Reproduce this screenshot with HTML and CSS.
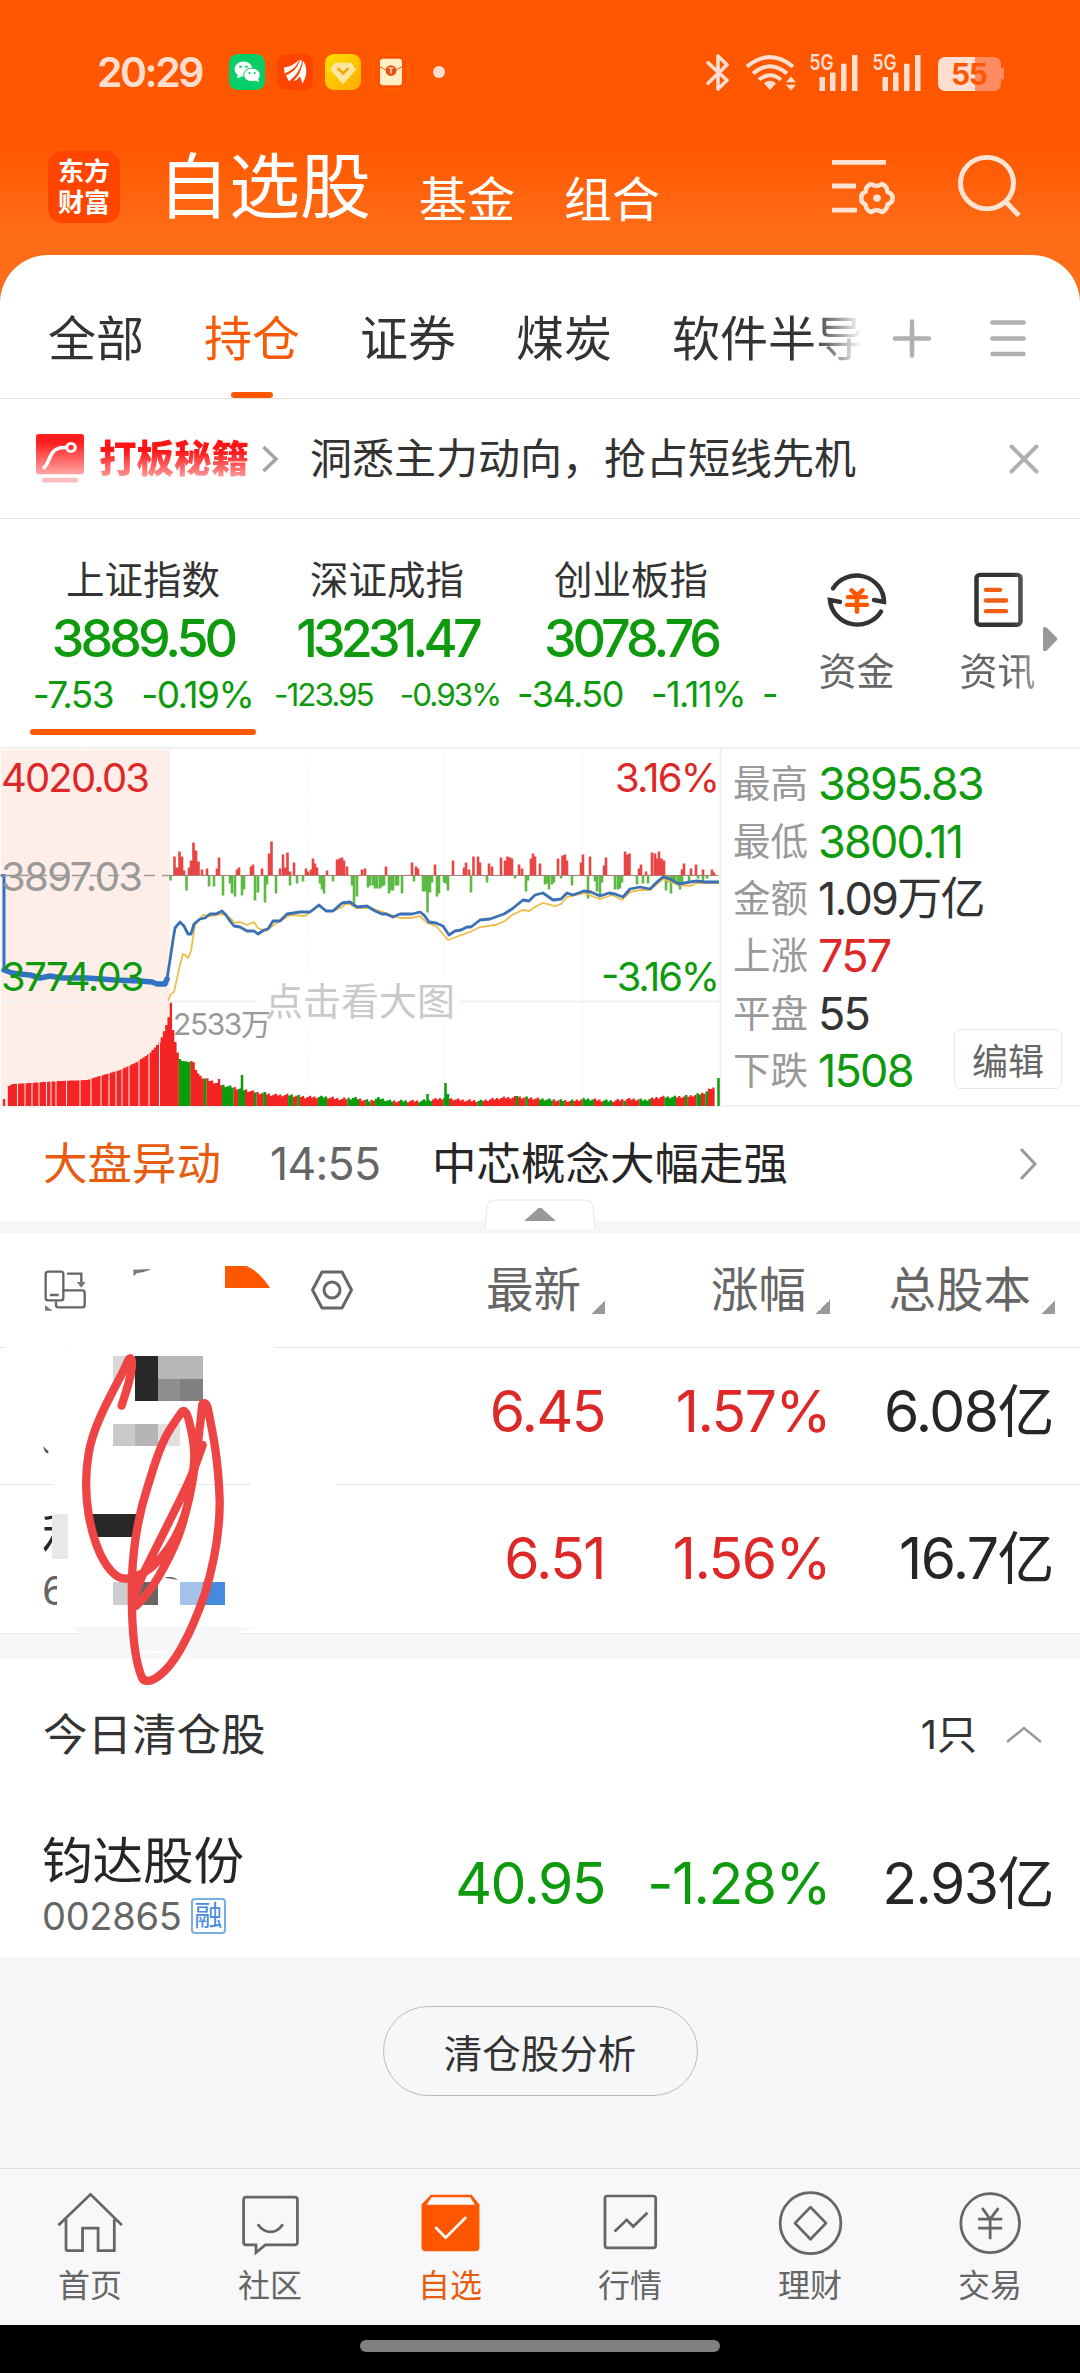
FILE: index.html
```html
<!DOCTYPE html>
<html lang="zh-CN">
<head>
<meta charset="utf-8">
<title>自选股</title>
<link rel="stylesheet" href="styles.css">
</head>
<body>
<header class="top">
  <div class="status">
    <span class="clock">20:29</span>
    <div class="apps">
      <svg width="36" height="36" viewBox="0 0 36 37" preserveAspectRatio="none"><rect width="36" height="37" rx="9" fill="#05cf66"/><ellipse cx="14.500" cy="15.500" rx="9" ry="7.700" fill="#fff"/><path d="M9 20l-1 5 5-2z" fill="#fff"/><ellipse cx="23" cy="21.500" rx="8.300" ry="7" fill="#fff" stroke="#05cf66"/><path d="M26 27l4 2-1-4z" fill="#fff"/><g fill="#05cf66"><circle cx="11.500" cy="13" r="1.300"/><circle cx="17.500" cy="13" r="1.300"/><circle cx="20.500" cy="19.500" r="1.100"/><circle cx="25.700" cy="19.500" r="1.100"/></g></svg>
      <svg width="36" height="36" viewBox="0 0 36 37" preserveAspectRatio="none"><rect width="36" height="37" rx="9" fill="#ff4400"/><g fill="#fff"><path d="M7 14C14 13 18 10 22 6C20 13 15 17 7.500 20z"/><path d="M9 22C17 19 21 13 23 6L25 7C24 15 19 23 12 28z"/><path d="M16 28C22 23 25 15 26 7C31 14 30 24 25 31C25 28 24 25 23 23Q20 27 16 28z"/></g></svg>
      <svg width="36" height="36" viewBox="0 0 36 37" preserveAspectRatio="none"><defs><linearGradient id="gold" x2="1" y2="1"><stop stop-color="#ffe000"/><stop offset="1" stop-color="#ffab00"/></linearGradient></defs><rect width="36" height="37" rx="9" fill="url(#gold)"/><path d="M10 9H26L31 16L19 30Q18 31 17 30L5 16z" fill="#ffe6a0"/><path d="M12.500 14.500l5.500 5.500 5.500-5.500" fill="none" stroke="#f5a800" stroke-width="2.500"/></svg>
      <svg width="36" height="36" viewBox="0 0 36 37" preserveAspectRatio="none"><rect x="1" y="1" width="34" height="35" rx="9" fill="#ff5200" stroke="#ff6a00"/><rect x="7" y="5" width="22" height="27" rx="3" fill="#fff0c4"/><path d="M7 13Q12 17 18 17T29 13" fill="none" stroke="#e4521a"/><circle cx="18" cy="17" r="5.500" fill="#ee4b12"/><path d="M15.500 14.500h5M18 14.500v5.500" stroke="#ffe9b8" stroke-width="1.500"/></svg>
    </div>
    <i class="dot"></i>
    <svg class="signals" width="300" height="39" viewBox="705 54 300 40" preserveAspectRatio="none" fill="#ffded0">
      <path d="M708 64L727 82L718 91V57L727 66L708 85" fill="none" stroke="#ffded0" stroke-width="3.600" stroke-linejoin="round" stroke-linecap="round"/>
      <g fill="none" stroke="#ffded0" stroke-width="4"><path d="M747 68Q770 48.500 793 68"/><path d="M753 75Q770 60 787 75"/><path d="M759 81.500Q770 72 781 81.500"/></g>
      <path d="M764 85Q770 80 776 85L770 92zM786 84l5-6 5 6zM786 86.500l5 6 5-6z"/>
      <text class="net" x="809.500" y="71.500" textLength="24" lengthAdjust="spacingAndGlyphs">5G</text>
      <path d="M819.500 78.500h5.500V93h-5.500zM830 74h5.500v19H830zM841 65h5.500v28H841zM852 56h5.500v37H852z"/>
      <text class="net" x="872.500" y="71.500" textLength="24" lengthAdjust="spacingAndGlyphs">5G</text>
      <path d="M882.500 78.500h5.500V93h-5.500zM893 74h5.500v19H893zM904 65h5.500v28H904zM915 56h5.500v37H915z"/>
      <path d="M975 58h19a7 7 0 0 1 7 7v4h3v12h-3v5a7 7 0 0 1-7 7h-19z" fill="#ff8b61"/>
      <path d="M975 58h-30a7 7 0 0 0-7 7v21a7 7 0 0 0 7 7h30z"/>
      <text class="level" x="951" y="87" textLength="37">55</text>
    </svg>
  </div>
  <div class="heading">
    <div class="logo">东方<br>财富</div>
    <h1>自选股</h1>
    <span class="sub">基金</span>
    <span class="sub">组合</span>
    <svg class="adjust" width="64" height="58" viewBox="830 164 64 60" preserveAspectRatio="none" fill="none" stroke="#ffe4d3" stroke-width="5"><path d="M831 168.500h54M831 193h24M831 218h25"/><path stroke-width="4.500" stroke-linejoin="round" d="M870 191Q875.500 195 881 191Q886 193 886.500 199Q892 201 891.500 205.500Q892 210 886.500 212Q886 218 881 220Q875.500 216 870 220Q865 218 864.500 212Q859.500 210 860.500 205.500Q859.500 201 864.500 199Q865 193 870 191z"/><circle cx="876" cy="205.500" r="3.800" fill="#ffe4d3" stroke="none"/></svg>
    <svg class="search" width="66" height="66" viewBox="957 159 66 68" preserveAspectRatio="none" fill="none" stroke="#ffe4d3" stroke-width="5"><circle cx="987" cy="190" r="26.500"/><path d="M1006 209.500L1019 223.500"/></svg>
  </div>
</header>

<main>
  <nav class="tabs">
    <div class="tab-list"><span>全部</span><span class="active">持仓</span><span>证券</span><span>煤炭</span><span>软件半导</span></div>
    <svg width="134" height="40" viewBox="893 318 134 40" class="tab-tools" fill="none" stroke="#b0b0b0" stroke-width="4.500" stroke-linecap="round"><path d="M895 338.500h34M912 321.500v34M992.500 322.500h31M992.500 338.500h31M992.500 354h31"/></svg>
  </nav>

  <section class="banner">
    <svg width="48" height="49" viewBox="0 0 48 51" preserveAspectRatio="none"><defs><linearGradient id="red" x2="0" y2="1"><stop offset=".2" stop-color="#ff1d1d"/><stop offset="1" stop-color="#ffa6a6"/></linearGradient></defs><rect width="48" height="42" rx="3" fill="url(#red)"/><path d="M8 35C15 29 12 14 29 14" fill="none" stroke="#fff" stroke-width="3.600" stroke-linecap="round"/><circle cx="35" cy="14" r="4.200" fill="none" stroke="#fff" stroke-width="3"/><rect x="6" y="45.500" width="36" height="5" rx="2" fill="#ffbcbc"/></svg>
    <b>打板秘籍</b>
    <svg width="18" height="28" viewBox="0 0 18 28" fill="none" stroke="#a3a3a3" stroke-width="3.500"><path d="M2.500 2l12.500 12-12.500 12"/></svg>
    <span>洞悉主力动向，抢占短线先机</span>
    <svg class="close" width="30" height="30" viewBox="0 0 30 30" stroke="#b0b0b0" stroke-width="4" stroke-linecap="round"><path d="M2.500 2.500l25 25m0-25l-25 25"/></svg>
  </section>

  <section class="indices">
    <div class="index current"><h3>上证指数</h3><strong>3889.50</strong><p class="wide"><span>-7.53</span><span>-0.19%</span></p></div>
    <div class="index"><h3>深证成指</h3><strong class="tight">13231.47</strong><p class="small"><span>-123.95</span><span>-0.93%</span></p></div>
    <div class="index"><h3>创业板指</h3><strong>3078.76</strong><p class="mid"><span>-34.50</span><span>-1.11%</span></p></div>
    <div class="peek">-</div>
    <div class="shortcut">
      <svg width="64" height="62" viewBox="0 0 64 64" preserveAspectRatio="none" fill="none" stroke="#333" stroke-width="4.500" stroke-linecap="round"><path d="M8 20A27.500 27.500 0 0 1 59 34L49 32"/><path d="M56 44A27.500 27.500 0 0 1 5 32L15 34"/><g stroke="#ff5700" stroke-width="4.500"><path d="M26.500 22l5.500 5 5.500-5M23 29h18M22 37h20M32 27v17"/></g></svg>
      <span>资金</span>
    </div>
    <div class="shortcut fade">
      <svg width="64" height="62" viewBox="0 0 64 64" preserveAspectRatio="none" fill="none" stroke="#333" stroke-width="4.500"><rect x="10.500" y="6" width="44" height="51.500" rx="3.500"/><path d="M20 21.500h14M20 32.500h20M20 43.500h20" stroke="#f06014" stroke-linecap="round"/></svg>
      <span>资讯</span>
    </div>
    <svg class="more" width="16" height="26" viewBox="0 0 16 28" preserveAspectRatio="none"><path d="M1 2Q3 0 5 2L15 13Q16 14 15 15L5 26Q3 28 1 26z" fill="#999"/></svg>
  </section>

  <section class="market">
    <svg class="chart" id="chart" width="722" height="360" viewBox="0 747 722 360">
      <rect x="1" y="750" width="169" height="356" fill="#ffeee8"/>
      <g stroke="#e6e6e6" stroke-dasharray="1.500 3"><path d="M87 750V1106M307 750V1106M444 750V1106M582 750V1106"/></g>
      <path d="M0 1001.500H720M0 748H722M720.500 748V1106M0 1106.500H722" stroke="#f1f1f2" stroke-width="2"/>
      <rect x="257" y="979" width="203" height="46" fill="#fff"/>
      <text x="265" y="1014.500" class="hint" textLength="190">点击看大图</text>
      <path d="M0 875.500H170" stroke="#999" stroke-width="1.500" stroke-dasharray="11 7"/>
      <g class="prices">
        <text x="1" y="792" textLength="149" fill="#de2828">4020.03</text>
        <text x="1" y="891" textLength="142" fill="#999">3897.03</text>
        <text x="1" y="991" textLength="144" fill="#0d9a0d">3774.03</text>
        <text x="615" y="792" textLength="105" fill="#de2828">3.16%</text>
        <text x="601" y="991" textLength="119" fill="#0d9a0d">-3.16%</text>
      </g>
      <text x="173" y="1034.500" class="volume-max" textLength="98">2533万</text>
    </svg>
    <dl class="quote">
      <div><dt>最高</dt><dd class="down">3895.83</dd></div>
      <div><dt>最低</dt><dd class="down">3800.11</dd></div>
      <div><dt>金额</dt><dd>1.09万亿</dd></div>
      <div><dt>上涨</dt><dd class="up">757</dd></div>
      <div><dt>平盘</dt><dd>55</dd></div>
      <div><dt>下跌</dt><dd class="down">1508</dd></div>
      <button class="edit">编辑</button>
    </dl>
  </section>

  <section class="news">
    <span class="kind">大盘异动</span><time>14:55</time><span class="title">中芯概念大幅走强</span>
    <svg width="20" height="36" viewBox="0 0 20 36" fill="none" stroke="#999" stroke-width="3"><path d="M3 3l14 15L3 33"/></svg>
    <svg class="fold" width="112" height="35" viewBox="0 0 112 35"><path d="M1 30L3 7Q4 1 11 1H101Q108 1 109 7L111 30Z" fill="#fff"/><path d="M1 30L3 7Q4 1 11 1H101Q108 1 109 7L111 30" fill="none" stroke="#eceef0" stroke-width="1.500"/><path d="M40 22L54 9.500Q56 8 58 9.500L72 22z" fill="#999"/></svg>
  </section>

  <section class="holdings">
    <div class="row columns">
      <span>最新<i></i></span><span>涨幅<i></i></span><span>总股本<i></i></span>
      <svg class="gear" width="44" height="44" viewBox="0 0 44 44" fill="none" stroke="#666" stroke-width="3"><path stroke-linejoin="round" d="M12 4H32L41.500 22L32 40H12L2.500 22z"/><circle cx="22" cy="22" r="8"/></svg>
    </div>
    <div class="row first"><b class="up">6.45</b><b class="up">1.57%</b><b>6.08亿</b></div>
    <div class="row second">
      <div class="cut"><span class="cut-name">利</span><span class="cut-code">6</span></div>
      <b class="up">6.51</b><b class="up">1.56%</b><b>16.7亿</b>
    </div>
    <svg class="scribble" width="400" height="510" viewBox="0 0 1200 1530">
      <path fill="#fff" d="M14 465H204V478H14zM208 465H828V478H208zM157 877H533V890H157zM754 877H1008V890H754z"/>
      <path fill="#f6f7f9" d="M218 1311H768L690 1336H245z"/>
      <path fill="#fff" d="M360 1379Q430 1384 510 1383Q460 1392 425 1391Q400 1385 360 1379z"/>
      <g fill="none" stroke="#666" stroke-width="7"><rect x="137" y="245" width="53" height="86" rx="7"/><path d="M150 315H176M168 334V345Q168 352 175 352H247Q254 352 254 345V308Q254 301 247 301H192M201 251H244V280"/></g>
      <path fill="#777" d="M230 276H257L244 293zM135 346L158 362H135zM400 239L454 237Q430 249 410 250L401 259z"/>
      <path fill="#ff5700" d="M675 228H740Q779 246 810 294H675z"/>
      <path fill="#555" d="M129 769L145 783V791L135 785zM496 1162Q520 1158 534 1170Q515 1165 496 1164z"/>
      <path fill="#d8d8d8" d="M339 498h66v69h-66z"/><path fill="#282828" d="M405 498h69v135h-69zM276 972h140v69H276z"/><path fill="#b7b7b7" d="M474 498h135v69H474z"/><path fill="#8f8f8f" d="M474 567h66v66h-66z"/><path fill="#808080" d="M540 567h69v66h-69z"/>
      <path fill="#c9c9c9" d="M339 702h66v66h-66z"/><path fill="#b5b5b5" d="M405 702h69v66h-69z"/><path fill="#e0e0e0" d="M474 702h66v66h-66z"/><path fill="#e8e8e8" d="M156 972h48v135h-48z"/>
      <path fill="#cdcdcd" d="M339 1176h66v69h-66z"/><path fill="#666" d="M405 1176h69v69h-69z"/><path fill="#a3c3eb" d="M540 1176h68v69h-68z"/><path fill="#448add" d="M608 1176h67v69h-67z"/>
      <g fill="none" stroke="#ef4444" stroke-width="25" stroke-linecap="round" stroke-linejoin="round">
        <path d="M365 647C378 603 398 555 396 515C394 500 386 503 383 515C358 575 282 690 266 790C254 860 257 920 266 975C280 1050 305 1120 345 1154Q366 1172 394 1163C420 1157 440 1145 460 1127C500 1090 525 1050 545 1000C572 930 582 850 592 770C600 710 604 670 607 643C612 635 620 640 624 658C640 735 655 810 659 930C660 1010 645 1110 615 1210C580 1310 530 1420 475 1459C450 1477 432 1477 425 1461C396 1390 394 1250 396 1160C401 1040 420 960 443 890C465 820 475 780 500 735C515 708 533 684 545 666C553 659 560 668 565 685C580 740 586 780 582 820C575 900 560 970 535 1040C505 1115 455 1205 408 1248"/>
        <path d="M608 765C590 820 570 870 545 920C510 990 470 1070 440 1130C425 1160 410 1190 402 1230"/>
      </g>
    </svg>
  </section>

  <section class="cleared">
    <div class="cleared-head"><span>今日清仓股</span><em>1只</em><svg width="38" height="20" viewBox="0 0 38 20" fill="none" stroke="#999" stroke-width="2.500"><path d="M2 17L19 3L36 17"/></svg></div>
    <div class="row stock">
      <div class="name"><strong>钧达股份</strong><small>002865<i>融</i></small></div>
      <b class="down">40.95</b><b class="down">-1.28%</b><b>2.93亿</b>
    </div>
  </section>
  <div class="analysis"><button>清仓股分析</button></div>
</main>

<footer>
  <a><svg preserveAspectRatio="none" viewBox="161 85 200 200"><path d="M168 193L261 101L352 193M190 175V263Q190 269 197 269H238V202H283V269H330V175"/></svg>首页</a>
  <a><svg preserveAspectRatio="none" viewBox="683 85 200 200"><path d="M713 109H853Q861 109 861 117V244Q861 252 853 252H768L741 275V252H713Q705 252 705 244V117Q705 109 713 109zM746 190Q762 213 783 213T819 190"/></svg>社区</a>
  <a class="selected"><svg preserveAspectRatio="none" viewBox="1205 85 200 200"><path d="M1221 131L1248 102H1366L1389 131V258Q1389 271 1376 271H1234Q1221 271 1221 258z" fill="#ff5700" stroke="none"/><path d="M1250 110H1362L1376 132H1236z" fill="#f8f8fa" stroke="none"/><path d="M1261 199L1291 230L1350 169" stroke="#fff"/></svg>自选</a>
  <a><svg preserveAspectRatio="none" viewBox="160 85 200 200"><rect x="186" y="106" width="147" height="155" rx="7"/><path d="M214 212L249 177L268 197L309 156"/></svg>行情</a>
  <a><svg preserveAspectRatio="none" viewBox="683 85 200 200"><ellipse cx="783" cy="187" rx="88" ry="91"/><path stroke-linejoin="round" d="M783 139L828 187L783 235L738 187z"/></svg>理财</a>
  <a><svg preserveAspectRatio="none" viewBox="1205 85 200 200"><ellipse cx="1304" cy="187" rx="85" ry="88"/><path d="M1281 142L1304 175L1328 142M1269 175H1339M1269 202H1339M1304 175V235"/></svg>交易</a>
</footer>
<div class="gesture"><i></i></div>
<script src="chart.js"></script>
</body>
</html>
```

FILE: styles.css
```css
* { box-sizing: border-box; margin: 0; padding: 0; }
body { width: 1080px; height: 2373px; overflow: hidden; font-family: Inter, "Noto Sans CJK SC", sans-serif; font-weight: 400; color: #333; background: #fff; display: flex; flex-direction: column; }
i, em { font-style: normal; }
svg { display: block; flex: none; overflow: visible; }
.up { color: #de2828; }
.down { color: #0d9a0d; }

.top { height: 303px; margin-bottom: -48px; flex: none; background: linear-gradient(#ff5700 143px, #ff6d18 237px); }
.status { height: 144px; display: flex; align-items: center; padding-left: 97px; }
.clock { width: 132px; font-size: 41px; font-weight: 600; color: #ffded0; letter-spacing: -2.500px; line-height: 50px; }
.apps { display: flex; gap: 12px; width: 204px; }
.dot { width: 12px; height: 12px; border-radius: 50%; background: #ffded0; }
.signals { margin-left: 260px; }
.net { font-size: 22px; font-weight: 600; }
.level { font-size: 30px; font-weight: 700; fill: #ff5700; }
.heading { display: flex; height: 111px; padding: 7px 0 0 48px; color: #fff; }
.logo { width: 72px; height: 72px; border-radius: 14px; background: #ff4500; font-size: 26px; font-weight: 700; line-height: 31px; padding: 5px 0 0 10px; }
h1 { font-size: 71px; font-weight: 400; line-height: 70px; margin-left: 38px; width: 261px; }
.sub { font-size: 48px; line-height: 97px; width: 145px; }
.adjust { margin: 7px 0 0 122px; }
.search { margin: 2px 0 0 62px; }

main { flex: none; height: 1913px; border-radius: 48px 48px 0 0; background: #fff; display: flex; flex-direction: column; }
main > * { flex: none; }
.tabs { height: 144px; border-bottom: 1px solid #e3e3e3; display: flex; align-items: stretch; padding-left: 48px; }
.tab-list { display: flex; gap: 60px; width: 814px; font-size: 48px; line-height: 168px; white-space: nowrap; overflow: hidden; -webkit-mask: linear-gradient(90deg, #000 765px, transparent 814px); mask: linear-gradient(90deg, #000 765px, transparent 814px); }
.tab-list .active { color: #f85a08; display: flex; flex-direction: column; }
.tab-list .active::after { content: ""; width: 42px; height: 6px; border-radius: 3px; background: #ff5700; align-self: center; margin-top: -31px; }
.tab-tools { margin: 63px 0 0 31px; }
.banner { height: 120px; border-bottom: 1px solid #e3e3e3; padding-left: 36px; display: flex; align-items: center; font-size: 42px; }
.banner b { margin-left: 15px; width: 162px; font-size: 37.500px; line-height: 54px; font-weight: 900; background: linear-gradient(#ff1515 35%, #ff9c9c 85%); -webkit-background-clip: text; background-clip: text; color: transparent; white-space: nowrap; }
.banner span { margin-left: 31px; width: 699px; line-height: 60px; }

.indices { height: 228px; padding: 41px 0 0 30px; display: flex; }
.index { width: 226px; height: 175px; margin-right: 18px; display: flex; flex-direction: column; align-items: center; white-space: nowrap; }
.index.current::after { content: ""; align-self: stretch; height: 6px; margin-top: 17px; background: #f85a08; border-radius: 3px; }
.index h3 { font-size: 38.500px; line-height: 40px; font-weight: 400; }
.index strong { font-size: 52px; line-height: 77px; font-weight: 500; letter-spacing: -4px; color: #0d9a0d; }
.index .tight { letter-spacing: -4.800px; }
.index p { display: flex; line-height: 35px; color: #0d9a0d; letter-spacing: -1.500px; }
.wide { font-size: 37px; gap: 28px; }
.index .small { font-size: 31.500px; gap: 27px; letter-spacing: -2px; }
.mid { font-size: 36px; gap: 28px; }
.peek { width: 40px; padding-top: 117px; font-size: 36px; line-height: 35px; color: #0d9a0d; }
.shortcut { width: 141px; padding-top: 9px; display: flex; flex-direction: column; align-items: center; font-size: 38px; line-height: 80px; color: #666; }
.shortcut:nth-of-type(5) { margin-left: -16px; }
.fade { -webkit-mask: linear-gradient(90deg, #000 85px, #0009 110px); mask: linear-gradient(90deg, #000 85px, #0009 110px); }
.more { margin: 66px 0 0 -26px; }

.market { height: 360px; display: flex; }
.prices { font-size: 40px; }
.hint { font-size: 38px; fill: #c9c9c9; }
.volume-max { font-size: 30px; fill: #999; }
.quote { width: 358px; position: relative; padding: 6px 0 0 11px; border: solid #f1f1f2; border-width: 2px 0; }
.quote div { display: flex; height: 57.400px; align-items: center; line-height: 57px; }
dt { width: 85px; font-size: 37.500px; color: #999; }
dd { font-size: 45px; letter-spacing: -1.800px; white-space: nowrap; }
.edit { position: absolute; left: 232px; top: 280px; width: 108px; height: 60px; border: 1px solid #e8e8e8; border-radius: 6px; background: #fff; font: inherit; font-size: 36px; color: #666; }

.news { height: 126px; border-bottom: 12px solid #f6f7f9; position: relative; display: flex; align-items: center; padding-left: 43px; font-size: 44.500px; line-height: 60px; }
.kind { width: 227px; color: #e85c10; }
.news time { width: 162px; color: #666; letter-spacing: -.700px; }
.title { width: 586px; color: #262626; }
.fold { position: absolute; left: 484px; top: 92px; }

.holdings { position: relative; height: 426px; border-bottom: 25px solid #f6f7f9; }
.row { display: flex; justify-content: flex-end; align-items: center; position: relative; }
.row b { font-size: 57px; font-weight: 400; letter-spacing: -1.500px; line-height: 70px; text-align: right; width: 224px; white-space: nowrap; }
.row b:last-child { color: #262626; margin-right: 27px; width: 223px; }
.row b:nth-last-child(3) { width: 230px; margin-right: 1px; }
.columns { height: 115px; border-bottom: 1px solid #e6e6e6; font-size: 47.500px; color: #666; }
.columns span { width: 225px; display: flex; justify-content: flex-end; align-items: flex-end; gap: 10px; line-height: 60px; }
.columns span:nth-child(3) { margin-right: 25px; }
.columns i { width: 14px; height: 14px; margin-bottom: 6px; background: linear-gradient(135deg, transparent 50%, #999 50%); }
.gear { position: absolute; left: 310px; top: 35px; }
.first { height: 137px; padding-bottom: 8px; border-bottom: 1px solid #e6e6e6; }
.second { height: 149px; border-bottom: 1px solid #e9ebed; }
.cut { position: absolute; left: 42px; top: 24px; color: #262626; }
.cut span { display: block; overflow: hidden; }
.cut-name { width: 10px; font-size: 50px; line-height: 54px; }
.cut-code { width: 15px; margin-top: 6px; font-size: 40px; line-height: 44px; color: #666; }
.scribble { position: absolute; left: 0; top: -43px; }

.cleared { height: 298px; }
.cleared-head { height: 152px; display: flex; align-items: center; padding-left: 43px; font-size: 44.500px; line-height: 60px; }
.cleared-head span { flex: 1; }
.cleared-head em { font-size: 40px; margin-right: 28px; }
.cleared-head svg { margin-right: 37px; }
.stock { height: 146px; }
.name { width: 300px; position: absolute; left: 42px; top: 13px; display: flex; flex-direction: column; }
.name strong { font-size: 50.500px; font-weight: 400; line-height: 74px; color: #262626; }
.name small { font-size: 38px; line-height: 36px; color: #666; display: flex; align-items: center; gap: 9px; letter-spacing: -.300px; }
.name i { width: 35px; height: 36px; border: 2px solid #79aee4; border-radius: 4px; color: #448add; font-size: 28px; line-height: 32px; text-align: center; }
.analysis { flex: 1; background: #f6f7f9; padding-top: 49px; }
.analysis button { display: block; margin: 0 auto; width: 315px; height: 90px; border-radius: 45px; border: 1.500px solid #bbb; background: none; font: inherit; font-size: 38.500px; color: #333; }

footer { height: 157px; flex: none; background: #f8f8fa; border-top: 1px solid #dfdfe1; display: flex; }
footer a { width: 180px; display: flex; flex-direction: column; align-items: center; font-size: 32px; line-height: 60px; color: #666; padding-top: 20px; }
footer svg { width: 69px; height: 67px; fill: none; stroke: #666; stroke-width: 8px; }
footer .selected { color: #e85c10; }
.gesture { flex: 1; background: #000; padding-top: 15px; }
.gesture i { display: block; width: 360px; height: 12px; border-radius: 6px; background: #808080; margin: 0 auto; }
```

FILE: chart.js
```js
const svg = document.getElementById("chart");
const hint = svg.querySelector(".hint");

function draw(d, attrs) {
  const p = document.createElementNS("http://www.w3.org/2000/svg", "path");
  p.setAttribute("d", d);
  for (const k in attrs) p.setAttribute(k, attrs[k]);
  svg.insertBefore(p, hint);
}

// Order flow around the previous close: x position, height.
const buys = [174.5,19,177,8,179.5,24,182,19,184,5,189,8,191,15,193.5,33,196,25,198.5,14,202,6,207,7,217,7,219,18,237,6,239,8,251,9,253,11,262,7,269,22,271.5,34,280,7,283,21,285,8,287.5,23,290,4,294,13,306,7,308,4,311,6,313,17,315,12,317,8,327,5,337,16,339.5,17,342,18,344,15,347,9,362,6,365,7,386,9,412,13,416,9,418,7,435,11,453,15,464,8,466,13,469,6,473.5,19,478,19,480,13,489,12,492,9,501,18,505,15,507.5,19,510,18,512,17,519,11,522,7,531,17,533,22,535,19,540,12,558,17,562.5,20,565,21,567,15,581,13,583,21,590,19,604,10,606,18,625,24,627,21,629.5,22,639,7,641,11,646,4,652,23,655,22,657,17,659,24,661.5,17,664,15,682,6,684,12,691,7,696,11,703,6,712,6,714,3];
const sells = [170.5,5,186.5,15,209,11,214,11,223,20,230,8,232,18,235,21,242,20,244,14,255,25,258,17,265,27,267,9,276,18,290,10,297,8,303,6,320,8,322,14,324,18,333,6,352,10,354,28,357,21,368,12,370,10,373,10,375,13,377,13,380,13,382,11,384,10,389,18,391,15,393,15,396,10,398,10,402,18,414,6,423,16,425,16,427.5,37,430,17,432,7,437,21,439,18,444,7,446,8,448,15,471,17,487,7,515,3,526,16,528,5,545,9,547,8,549,14,552,9,554,7,561,3,572,10,588,23,595,6,597,16,600,20,602,7,615,14,618,14,620,13,622,7,637,9,643,8,648,8,666,15,668,7,671,18,673,8,675,7,678,8,680,14,682,7,689,6,698,3,703,7,707,3];
const flow = (list, dir) => {
  let d = "";
  for (let i = 0; i < list.length; i += 2) d += `M${list[i]} 875.5v${dir * list[i + 1]}`;
  return d;
};
draw(flow(buys, -1), { stroke: "#e84545", "stroke-width": 2.6 });
draw(flow(sells, 1), { stroke: "#5cb944", "stroke-width": 2.6 });
draw("M170 875.5H718", { stroke: "#a87a70", "stroke-width": 1 });

// Volume envelope, interpolated between samples.
const env = [9,20,12,22,30,23,60,25,87,26,100,30,120,36,137,44,150,53,160,64,166,80,169,90,171,104,173,77,176,61,179,48,182,45,190,44,193,46,196,36,200,30,206,27,214,24,222,21,232,19,245,16,260,13,275,11,290,11,305,9,325,9,340,7,355,8,370,5,378,8,390,5,420,5,445,8,460,6,480,5,500,8,520,9,540,7,570,5,585,7,610,5,630,7,645,6,660,9,675,9,690,10,700,12,706,14,712,18];
const level = x => {
  for (let i = 2; i < env.length; i += 2) {
    if (x <= env[i]) {
      const t = (x - env[i - 2]) / (env[i] - env[i - 2]);
      return env[i - 1] + t * (env[i + 1] - env[i - 1]);
    }
  }
  return 18;
};
const spikes = [[219, 27], [242, 31], [265, 14], [427.5, 12], [445.5, 23], [448, 12], [517, 10]];
const greens = [[180, 190], [204, 206], [212, 214], [222, 234], [238, 245], [254, 256], [264, 266], [289, 292], [297, 300], [319, 328], [348, 358], [366, 370], [374, 394], [400, 407], [418, 432], [443, 449], [456, 458], [478, 482], [526, 528], [540, 553], [560, 565], [572, 574], [583, 594], [604, 613], [624, 626], [640, 650], [664, 676], [684, 688], [697, 702], [706, 708]];
let redBars = "M4 1106v-7", greenBars = "";
for (let x = 9, n = 0; x < 714; x += 2.28, n++) {
  const wobble = x > 200 ? (n * 7 % 5 - 2) * .6 : 0;
  const bar = `M${x.toFixed(1)} 1106v${-(level(x) + wobble).toFixed(1)}`;
  if (greens.some(g => x >= g[0] && x <= g[1])) greenBars += bar;
  else redBars += bar;
}
spikes.forEach(([x, h], i) => { if (i) greenBars += `M${x} 1106v${-h}`; else redBars += `M${x} 1106v${-h}`; });
greenBars += "M718.5 1106v-28";
draw(redBars, { stroke: "#f42424", "stroke-width": 2.3 });
draw(greenBars, { stroke: "#0a9c0a", "stroke-width": 2.5 });
let gaps = "";
for (const x of [17.5, 25, 32, 39, 46.5, 51, 56, 66.5, 80, 91, 101, 109, 116, 122, 129, 139, 149, 159.5]) gaps += `M${x} 1106V1000`;
draw(gaps, { stroke: "#ffeee8", "stroke-width": 1 });

draw("M168 1001L171 994L174 992L180 965L183 954L185 955L188 958L191 951L195 925L203 915L210 916L222 914L230 918L235 923L240 922L247 925L254 922L258 928L266 931L275 924L282 920L290 915L305 916L310 912L319 906L326 911L333 911L342 907L347 903L357 908L370 908L386 913L400 918L410 918L420 916L427 923L436 926L443 934L448 940L456 937L470 932L480 927L495 925L505 921L512 915L523 910L529 911L535 907L543 903L555 906L561 904L567 897L584 893L600 899L612 895L622 900L630 892L640 890L650 890L657 884L663 879L679 885L690 886L697 883L719 883", { fill: "none", stroke: "#efbd4b", "stroke-width": 1.8 });
draw("M167 979L170 960L173 940L175 928L180 922L184 926L188 934L191 934L194 924L200 919L205 918L210 914L216 914L222 911L226 915L230 921L234 926L240 927L247 931L254 931L258 934L264 930L268 929L273 921L280 921L287 914L300 912L310 912L319 905L326 911L333 911L342 903L350 902L357 907L367 906L375 911L382 914L386 914L393 917L400 914L412 914L420 912L424 915L429 922L436 923L443 926L449 935L455 931L461 930L467 927L471 927L480 920L490 919L504 914L512 909L523 900L529 901L535 895L543 893L553 900L561 899L567 893L573 895L584 891L591 892L600 896L609 893L615 894L623 897L630 889L640 887L650 889L657 882L663 877L670 879L679 884L690 882L697 881L705 882L719 882", { fill: "none", stroke: "#3a70b4", "stroke-width": 2.8, "stroke-linejoin": "round" });
draw("M1 875.5H4V970L12 973L20 974L30 975L40 978L50 976L62 978L87 978L115 980L140 981L152 982L157 984L165 984L167 979", { fill: "none", stroke: "#3272c2", "stroke-width": 3 });
draw("M4 970L12 973L20 974L30 975L40 978L50 976L62 978L87 978L115 980L140 981L152 982L157 984L165 984L167 979", { fill: "none", stroke: "#3272c2", "stroke-width": 5.5, "stroke-linejoin": "round", "stroke-linecap": "round" });
```
